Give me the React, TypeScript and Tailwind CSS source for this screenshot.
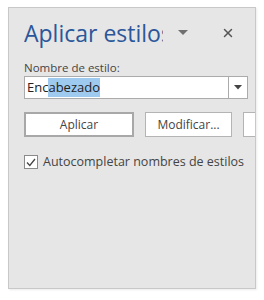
import { X } from 'lucide-react';

export default function App() {
  return (
    <div className="w-[264px] h-[300px] bg-white pt-[7px] pl-[8px] font-['Open_Sans','Noto_Sans',sans-serif]">
      <div className="w-[248px] h-[282px] bg-[#e6e6e6] border border-[#c8c8c8] shadow-[1px_1px_2px_rgba(0,0,0,0.08)] overflow-hidden">
        <div className="flex items-center h-[44px] pl-[15px] pr-[20px] pt-[6px]">
          <div className="w-[139px] overflow-hidden whitespace-nowrap text-[23px] leading-[30px] text-[#2b579a] font-normal">Aplicar estilos</div>
          <svg width="10" height="6" viewBox="0 0 10 6" className="ml-[15px]">
            <path d="M0 0 H10 L5 5 Z" fill="#707070" />
          </svg>
          <div className="flex-1" />
          <X className="w-[14px] h-[14px] text-[#555]" strokeWidth={2.5} />
        </div>
        <div className="pl-[15px] pt-[8px] text-[11.5px] leading-[16px] text-[#444]">Nombre de estilo:</div>
        <div className="ml-[15px] w-[224px] h-[23px] bg-white border border-[#ababab] flex">
          <div className="flex-1 flex items-center pl-[2px] text-[13px] text-[#222] whitespace-nowrap">
            <span>Enc</span>
            <span className="bg-[#9fcaf0]">abezado</span>
          </div>
          <div className="w-[19px] border-l border-[#ababab] flex items-center justify-center">
            <svg width="8" height="5" viewBox="0 0 8 5">
              <path d="M0 0 H8 L4 4.5 Z" fill="#444" />
            </svg>
          </div>
        </div>
        <div className="flex pl-[15px] mt-[13px] gap-[11px] whitespace-nowrap">
          <div className="w-[110px] h-[25px] shrink-0 bg-white border-2 border-[#a8a8a8] flex items-center justify-center text-[12px] text-[#444]">Aplicar</div>
          <div className="w-[87px] h-[25px] shrink-0 bg-white border border-[#b4b4b4] flex items-center justify-center text-[12px] text-[#444]">Modificar...</div>
          <div className="w-[40px] h-[25px] shrink-0 bg-white border border-[#b4b4b4]" />
        </div>
        <div className="flex items-center pl-[15px] mt-[16px] gap-[5px] whitespace-nowrap">
          <div className="w-[14px] h-[14px] bg-white border border-[#8a8a8a] flex items-center justify-center shrink-0">
            <svg width="10" height="9" viewBox="0 0 10 9">
              <path d="M1 4.5 L3.8 7.5 L9 1" stroke="#444" strokeWidth="1.3" fill="none" />
            </svg>
          </div>
          <span className="text-[12.5px] text-[#444]">Autocompletar nombres de estilos</span>
        </div>
      </div>
    </div>
  );
}
